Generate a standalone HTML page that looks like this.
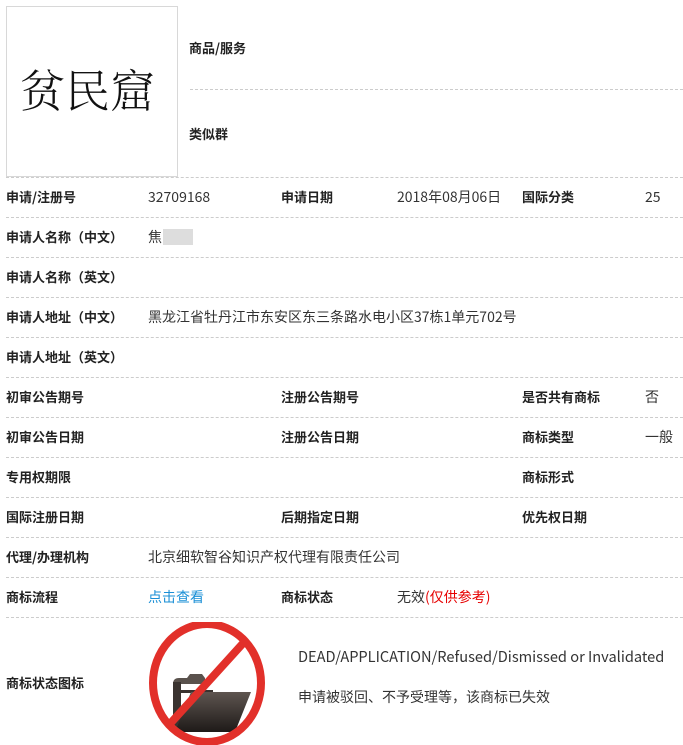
<!DOCTYPE html>
<html><head><meta charset="utf-8"><style>
body{margin:0;width:683px;height:745px;background:#fff;font-family:"Noto Sans CJK SC","Liberation Sans",sans-serif;font-size:13px;color:#333;position:relative;overflow:hidden}
.a{position:absolute;white-space:nowrap;line-height:20px}
.b{font-weight:bold;color:#222}
.v{font-size:14px}
.l{position:absolute;left:6px;right:0;border-top:1px dashed #ccc;height:0}
</style></head><body>
<div class="a" style="left:6px;top:6px;width:170px;height:169px;border:1px solid #d8d8d8"></div>
<div class="a" style="left:20px;top:58px;font-family:'Noto Serif CJK SC',serif;font-size:45px;color:#111;line-height:60px;font-weight:300">贫民窟</div>
<div class="a b" style="left:189px;top:38px">商品/服务</div>
<div class="l" style="left:190px;top:89px"></div>
<div class="a b" style="left:189px;top:124px">类似群</div>
<div class="l" style="top:177px"></div>
<div class="l" style="top:217px"></div>
<div class="l" style="top:257px"></div>
<div class="l" style="top:297px"></div>
<div class="l" style="top:337px"></div>
<div class="l" style="top:377px"></div>
<div class="l" style="top:417px"></div>
<div class="l" style="top:457px"></div>
<div class="l" style="top:497px"></div>
<div class="l" style="top:537px"></div>
<div class="l" style="top:577px"></div>
<div class="l" style="top:617px"></div>

<div class="a b" style="left:6px;top:187px">申请/注册号</div>
<div class="a v" style="left:148px;top:187px">32709168</div>
<div class="a b" style="left:281px;top:187px">申请日期</div>
<div class="a v" style="left:397px;top:187px">2018年08月06日</div>
<div class="a b" style="left:522px;top:187px">国际分类</div>
<div class="a v" style="left:645px;top:187px">25</div>

<div class="a b" style="left:6px;top:227px">申请人名称（中文）</div>
<div class="a v" style="left:148px;top:227px">焦</div>
<div class="a" style="left:163px;top:229px;width:30px;height:16px;background:#ddd"></div>

<div class="a b" style="left:6px;top:267px">申请人名称（英文）</div>
<div class="a b" style="left:6px;top:307px">申请人地址（中文）</div>
<div class="a v" style="left:148px;top:307px">黑龙江省牡丹江市东安区东三条路水电小区37栋1单元702号</div>
<div class="a b" style="left:6px;top:347px">申请人地址（英文）</div>

<div class="a b" style="left:6px;top:387px">初审公告期号</div>
<div class="a b" style="left:281px;top:387px">注册公告期号</div>
<div class="a b" style="left:522px;top:387px">是否共有商标</div>
<div class="a v" style="left:645px;top:387px">否</div>

<div class="a b" style="left:6px;top:427px">初审公告日期</div>
<div class="a b" style="left:281px;top:427px">注册公告日期</div>
<div class="a b" style="left:522px;top:427px">商标类型</div>
<div class="a v" style="left:645px;top:427px">一般</div>

<div class="a b" style="left:6px;top:467px">专用权期限</div>
<div class="a b" style="left:522px;top:467px">商标形式</div>

<div class="a b" style="left:6px;top:507px">国际注册日期</div>
<div class="a b" style="left:281px;top:507px">后期指定日期</div>
<div class="a b" style="left:522px;top:507px">优先权日期</div>

<div class="a b" style="left:6px;top:547px">代理/办理机构</div>
<div class="a v" style="left:148px;top:547px">北京细软智谷知识产权代理有限责任公司</div>

<div class="a b" style="left:6px;top:587px">商标流程</div>
<div class="a v" style="left:148px;top:587px;color:#1a8fd6">点击查看</div>
<div class="a b" style="left:281px;top:587px">商标状态</div>
<div class="a v" style="left:397px;top:587px">无效<span style="color:#e60000">(仅供参考)</span></div>

<div class="a b" style="left:6px;top:673px">商标状态图标</div>
<svg class="a" style="left:148px;top:622px" width="120" height="123" viewBox="0 0 120 123">
<defs><linearGradient id="g" x1="0" y1="0" x2="0" y2="1"><stop offset="0" stop-color="#5e5550"/><stop offset="1" stop-color="#1e1a18"/></linearGradient></defs>
<path d="M25 62 q0-6 6-6 h8 l3-4 h12 l3 4 v6 z" fill="#5a524d"/>
<path d="M25 60 h8 v50 h-8z" fill="#3a3330"/>
<path d="M25 68 h40 v3 h-40z" fill="#3a3330"/>
<path d="M27 110 l16-40 h60 l-16 40z" fill="url(#g)"/>
<ellipse cx="59" cy="61" rx="54" ry="59" fill="none" stroke="#e2302a" stroke-width="8"/>
<line x1="98" y1="18" x2="20" y2="104" stroke="#e2302a" stroke-width="8"/>
</svg>
<div class="a" style="left:298px;top:647px;font-size:14.6px">DEAD/APPLICATION/Refused/Dismissed or Invalidated</div>
<div class="a v" style="left:298px;top:687px">申请被驳回、不予受理等，该商标已失效</div>
</body></html>
